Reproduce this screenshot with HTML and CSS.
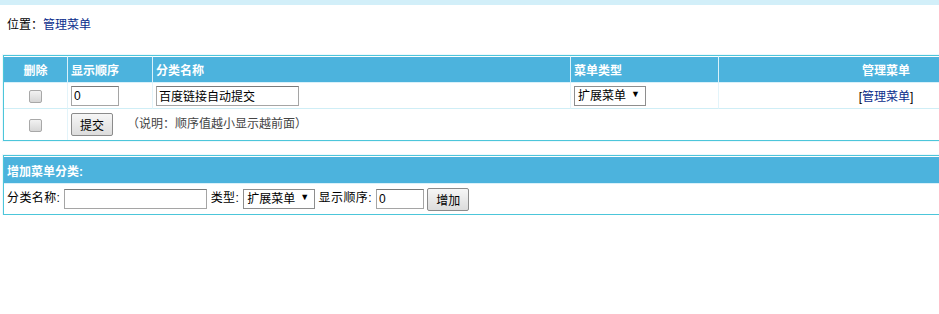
FILE: index.html
```html
<!DOCTYPE html>
<html lang="zh-CN">
<head>
    <meta charset="UTF-8">
    <title>管理菜单</title>
    <link rel="stylesheet" href="styles.css">
</head>
<body>
    <div class="topbar"></div>
    <div class="place">位置：<a href="#">管理菜单</a></div>

    <table class="grid">
        <tr class="head">
            <th class="c-del center">删除</th>
            <th class="c-ord">显示顺序</th>
            <th class="c-name">分类名称</th>
            <th class="c-type">菜单类型</th>
            <th class="c-mng center">管理菜单</th>
        </tr>
        <tr>
            <td class="center"><span class="chk"></span></td>
            <td><input class="txt ord" type="text" value="0"></td>
            <td><input class="txt name" type="text" value="百度链接自动提交"></td>
            <td><span class="sel"><select><option>扩展菜单</option></select></span></td>
            <td class="center">[<a href="#">管理菜单</a>]</td>
        </tr>
        <tr class="last">
            <td class="center"><span class="chk"></span></td>
            <td colspan="4"><button class="btn">提交</button><span class="note">（说明：顺序值越小显示越前面）</span></td>
        </tr>
    </table>

    <table class="grid add">
        <tr class="head">
            <th>增加菜单分类:</th>
        </tr>
        <tr class="last">
            <td class="form">
                <span class="lbl">分类名称:</span><input class="txt name" type="text">
                <span class="lbl">类型:</span><span class="sel"><select><option>扩展菜单</option></select></span>
                <span class="lbl">显示顺序:</span><input class="txt ord" type="text" value="0">
                <button class="btn">增加</button>
            </td>
        </tr>
    </table>
</body>
</html>
```

FILE: styles.css
```css
body{
    margin:0;
    font-family: "Liberation Sans", "Noto Sans CJK SC", sans-serif;
    font-size:12px;
    color:#000;
    background:#fff;
}
a{
    color:#0a2d8c;
    text-decoration:none;
}
.topbar{
    height:5px;
    background:#d2eff9;
}
.place{
    padding:12px 7px 0;
    height:38px;
    line-height:16px;
}
table.grid{
    width:1052px;
    margin-left:3px;
    border-collapse:separate;
    border-spacing:0;
    border:1px solid #4cc6da;
    box-shadow:0 0 0 1px #eef8fc;
}
table.grid.add{
    margin-top:14px;
}
.grid th{
    background:#4cb3dd;
    color:#fff;
    font-weight:bold;
    text-align:left;
    height:25px;
    padding:0 3px;
    border-right:1px solid #d9f1fa;
    border-top:1px solid #fff;
    border-bottom:1px solid #d9f1fa;
}
.grid td{
    height:25px;
    padding:0 3px;
    border-right:1px solid #e3f4fa;
    border-bottom:1px solid #cfeef6;
}
.grid tr.last td{
    height:31px;
    border-bottom:none;
}
.grid.add th{
    height:26px;
}
.grid.add tr.last td{
    height:30px;
}
.grid .center{
    text-align:center;
}
.c-del{ width:57px; }
.c-ord{ width:78px; }
.c-name{ width:411px; }
.c-type{ width:141px; }

.chk{
    display:inline-block;
    width:11px;
    height:11px;
    border:1px solid #a8a8a8;
    border-radius:2px;
    background:linear-gradient(#f2f2f2, #d6d6d6);
    vertical-align:middle;
}
.txt{
    box-sizing:border-box;
    height:20px;
    border:1px solid #a5a5a5;
    border-top-color:#7a7a7a;
    padding:0 2px;
    font-family:inherit;
    font-size:12px;
    vertical-align:middle;
}
.txt.ord{ width:48px; }
.txt.name{ width:143px; }
.sel{
    position:relative;
    display:inline-block;
    vertical-align:middle;
}
.sel select{
    appearance:none;
    -webkit-appearance:none;
    box-sizing:border-box;
    width:72px;
    height:20px;
    border:1px solid #8e8e8e;
    background:#fff;
    padding:0 0 0 3px;
    font-family:inherit;
    font-size:12px;
    color:#000;
}
.sel::after{
    content:"▼";
    position:absolute;
    right:6px;
    top:3px;
    font-size:9px;
    pointer-events:none;
}
.btn{
    box-sizing:border-box;
    height:23px;
    padding:0 8px;
    border:1px solid #8b8b8b;
    border-radius:2px;
    background:linear-gradient(#f6f6f6, #dcdcdc);
    font-family:inherit;
    font-size:12px;
    vertical-align:middle;
}
.note{
    margin-left:14px;
    color:#444;
}
.form{
    padding-left:4px;
}
.lbl{
    letter-spacing:0.4px;
    margin-right:4px;
}
```
